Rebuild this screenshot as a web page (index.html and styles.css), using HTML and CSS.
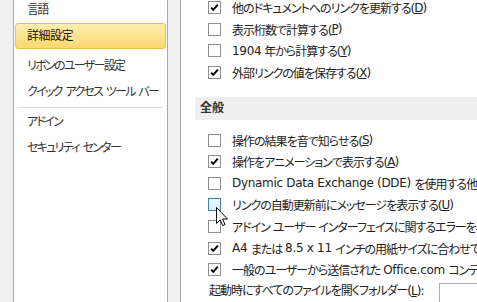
FILE: index.html
```html
<!DOCTYPE html>
<html>
  <head>
    <meta http-equiv="Content-Type" content="text/html; charset=UTF-8">
    <title>Excel のオプション</title>
    <link rel="stylesheet" href="styles.css">
  </head>
  <body>
    <div class="window">
      <div class="edge"></div>

      <ul class="nav">
        <li class="nav-item first">言語</li>
        <li class="nav-item selected">詳細設定</li>
        <li class="nav-item spaced">リボンのユーザー設定</li>
        <li class="nav-item">クイック アクセス ツール バー</li>
        <li class="nav-sep"></li>
        <li class="nav-item">アドイン</li>
        <li class="nav-item">セキュリティ センター</li>
      </ul>

      <div class="gap"></div>

      <div class="main">
        <div class="group top">
          <div class="row"><span class="box checked"></span>他のドキュメントへのリンクを更新する(<u>D</u>)</div>
          <div class="row"><span class="box"></span>表示桁数で計算する(<u>P</u>)</div>
          <div class="row"><span class="box"></span><span class="lat">1904</span> 年から計算する(<u>Y</u>)</div>
          <div class="row"><span class="box checked"></span>外部リンクの値を保存する(<u>X</u>)</div>
        </div>

        <div class="section-title">全般</div>

        <div class="group">
          <div class="row"><span class="box"></span>操作の結果を音で知らせる(<u>S</u>)</div>
          <div class="row"><span class="box checked"></span>操作をアニメーションで表示する(<u>A</u>)</div>
          <div class="row"><span class="box"></span><span class="lat">Dynamic Data Exchange (DDE) </span>を使用する他のアプリケーションを無視する(<u>O</u>)</div>
          <div class="row"><span class="box hover"></span>リンクの自動更新前にメッセージを表示する(<u>U</u>)</div>
          <div class="row"><span class="box"></span>アドイン ユーザー インターフェイスに関するエラーを表示する(<u>U</u>)</div>
          <div class="row"><span class="box checked"></span><span class="lat">A4 </span>または <span class="lat">8.5 x 11 </span>インチの用紙サイズに合わせて内容を調整する(<u>A</u>)</div>
          <div class="row"><span class="box checked"></span>一般のユーザーから送信された <span class="lat">Office.com </span>コンテンツを表示する(<u>B</u>)</div>
          <div class="row plain">起動時にすべてのファイルを開くフォルダー(<u>L</u>):<span class="path-box"></span></div>
        </div>
      </div>
    </div>

    <!-- mouse pointer over the hovered checkbox -->
    <svg class="cursor" width="13" height="20" viewBox="0 0 13 20">
      <path d="M0.5 0.5 L0.5 16.5 L4.2 12.9 L6.7 18.6 L9 17.6 L6.6 12 L11.5 12 Z" fill="#fff" stroke="#000" stroke-width="1" stroke-linejoin="miter"/>
    </svg>
  </body>
</html>
```

FILE: styles.css
```css
html, body {
  margin: 0;
  padding: 0;
}

body {
  font-family: "DejaVu Sans", "Noto Sans CJK JP", sans-serif;
  font-size: 12px;
  font-feature-settings: "palt";
  letter-spacing: -1px;
  color: #222;
  overflow: hidden;
}

/* latin runs keep (almost) their natural spacing */
.lat {
  letter-spacing: -0.3px;
}

.window {
  display: flex;
  width: 477px;
  height: 302px;
  overflow: hidden;
  background: #f0f0f0;
}

.edge {
  width: 13px;
  flex: none;
}

/* left list of pages */
.nav {
  list-style: none;
  margin: 0;
  padding: 0;
  width: 153px;
  flex: none;
  background: #fff;
  border-left: 1px solid #a9a9a9;
  border-right: 1px solid #a9a9a9;
  letter-spacing: -1.7px;
  word-spacing: 1.5px;
}

.nav-item {
  height: 26px;
  line-height: 24px;
  margin: 0 1px;
  padding-left: 11px;
  border: 1px solid transparent;
  border-radius: 3px;
  box-sizing: border-box;
  white-space: nowrap;
  color: #333;
}

.nav-item.first {
  margin-top: -3px;
}

.nav-item.spaced {
  margin-top: 4px;
}

.nav-item.selected {
  border-color: #e3bf5c;
  background: linear-gradient(#fdeeb0, #fcd96e);
  color: #111;
  letter-spacing: -0.5px;
}

.nav-sep {
  height: 0;
  margin: 2px 4px 1px;
  border-top: 1px solid #dcdcdc;
}

.gap {
  width: 12px;
  flex: none;
}

/* right pane */
.main {
  flex: 1;
  min-width: 0;
  background: #fff;
  border-left: 1px solid #a9a9a9;
  overflow: hidden;
}

.group.top {
  margin-top: -3px;
}

.row {
  display: flex;
  align-items: center;
  height: 21.6px;
  padding-left: 27px;
  white-space: pre;
}

.box {
  width: 13px;
  height: 13px;
  box-sizing: border-box;
  border: 1px solid #8e8f8f;
  background: #fff;
  margin-right: 11px;
  flex: none;
}

.box.checked {
  background: #fff url("data:image/svg+xml;utf8,<svg xmlns='http://www.w3.org/2000/svg' width='11' height='11' viewBox='0 0 11 11'><path d='M2.2 5.6 L4.3 7.9 L8.8 2.6' fill='none' stroke='black' stroke-width='1.9'/></svg>") no-repeat center;
}

.box.hover {
  border-color: #3c7fb1;
  background: linear-gradient(#eaf6fd, #d9f0fc);
}

.section-title {
  margin: 14px 0 9px 14px;
  height: 23px;
  line-height: 23px;
  padding-left: 5px;
  background: #efefef;
  font-weight: bold;
  letter-spacing: 0;
  color: #333;
}

.row.plain {
  align-items: flex-start;
  line-height: 21.6px;
  padding-left: 28px;
}

.path-box {
  display: inline-block;
  margin: 2px 0 0 16px;
  width: 120px;
  height: 24px;
  flex: none;
  border: 1px solid #abadb3;
  background: #fff;
}

.cursor {
  position: absolute;
  left: 216px;
  top: 207px;
}
```
